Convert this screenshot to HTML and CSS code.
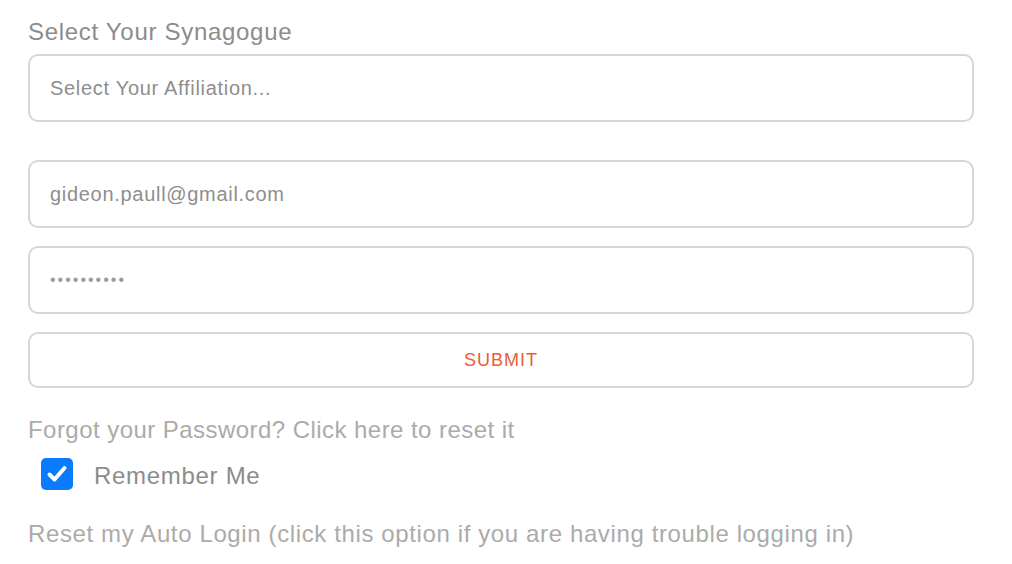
FILE: index.html
```html
<!DOCTYPE html>
<html lang="en">
<head>
    <meta charset="UTF-8">
    <meta name="viewport" content="width=device-width, initial-scale=1.0">
    <title>Login</title>
    <link rel="stylesheet" href="styles.css">
</head>
<body>
    <form class="login-form">
        <label class="form-title" for="affiliation">Select Your Synagogue</label>
        <div class="field select-field" id="affiliation">Select Your Affiliation...</div>

        <div class="field email-field">gideon.paull@gmail.com</div>
        <div class="field password-field">&bull;&bull;&bull;&bull;&bull;&bull;&bull;&bull;&bull;&bull;</div>

        <button type="button" class="submit-btn">SUBMIT</button>

        <a class="link-text forgot" href="#">Forgot your Password? Click here to reset it</a>
        <label class="remember">
            <span class="checkbox">
                <svg viewBox="0 0 32 32" width="32" height="32">
                    <path d="M8.5 16.5 L13.5 21.5 L23.5 10" fill="none" stroke="#fff" stroke-width="4" stroke-linecap="round" stroke-linejoin="round"/>
                </svg>
            </span>
            <span class="remember-text">Remember Me</span>
        </label>
        <a class="link-text reset" href="#">Reset my Auto Login (click this option if you are having trouble logging in)</a>
    </form>
</body>
</html>
```

FILE: styles.css
```css
/* login form */
body {
    margin: 0;
    padding: 0;
    background-color: #ffffff;
    font-family: "Liberation Sans", Arial, sans-serif;
}
.login-form {
    display: flex;
    flex-direction: column;
    padding: 18px 38px 0 28px;
}
.form-title {
    font-size: 24px;
    letter-spacing: 0.7px;
    color: #8c8c8c;
    line-height: 28px;
    margin-bottom: 8px;
}
.field {
    box-sizing: border-box;
    height: 68px;
    border: 2px solid #d6d6d6;
    border-radius: 10px;
    padding: 0 20px;
    display: flex;
    align-items: center;
    font-size: 20px;
    letter-spacing: 0.7px;
    color: #8e8e8e;
}
.select-field {
    margin-bottom: 38px;
}
.email-field {
    margin-bottom: 18px;
}
.password-field {
    margin-bottom: 18px;
    font-size: 16px;
    letter-spacing: 2px;
    color: #9a9a9a;
}
.submit-btn {
    box-sizing: border-box;
    height: 56px;
    background: #ffffff;
    border: 2px solid #d6d6d6;
    border-radius: 10px;
    font-family: "Liberation Sans", Arial, sans-serif;
    font-size: 18px;
    letter-spacing: 1px;
    color: #f05a36;
    cursor: pointer;
    margin-bottom: 28px;
}
.link-text {
    font-size: 24px;
    letter-spacing: 0.45px;
    color: #ababab;
    text-decoration: none;
    line-height: 28px;
}
.reset {
    letter-spacing: 0.62px;
}
.remember {
    display: flex;
    align-items: center;
    gap: 21px;
    padding-left: 13px;
    margin: 14px 0 30px;
    font-size: 24px;
    letter-spacing: 0.7px;
    color: #8c8c8c;
}
.remember-text {
    padding-top: 3px;
}
.checkbox {
    width: 32px;
    height: 32px;
    border-radius: 5px;
    background-color: #0a7bff;
    display: flex;
}
```
